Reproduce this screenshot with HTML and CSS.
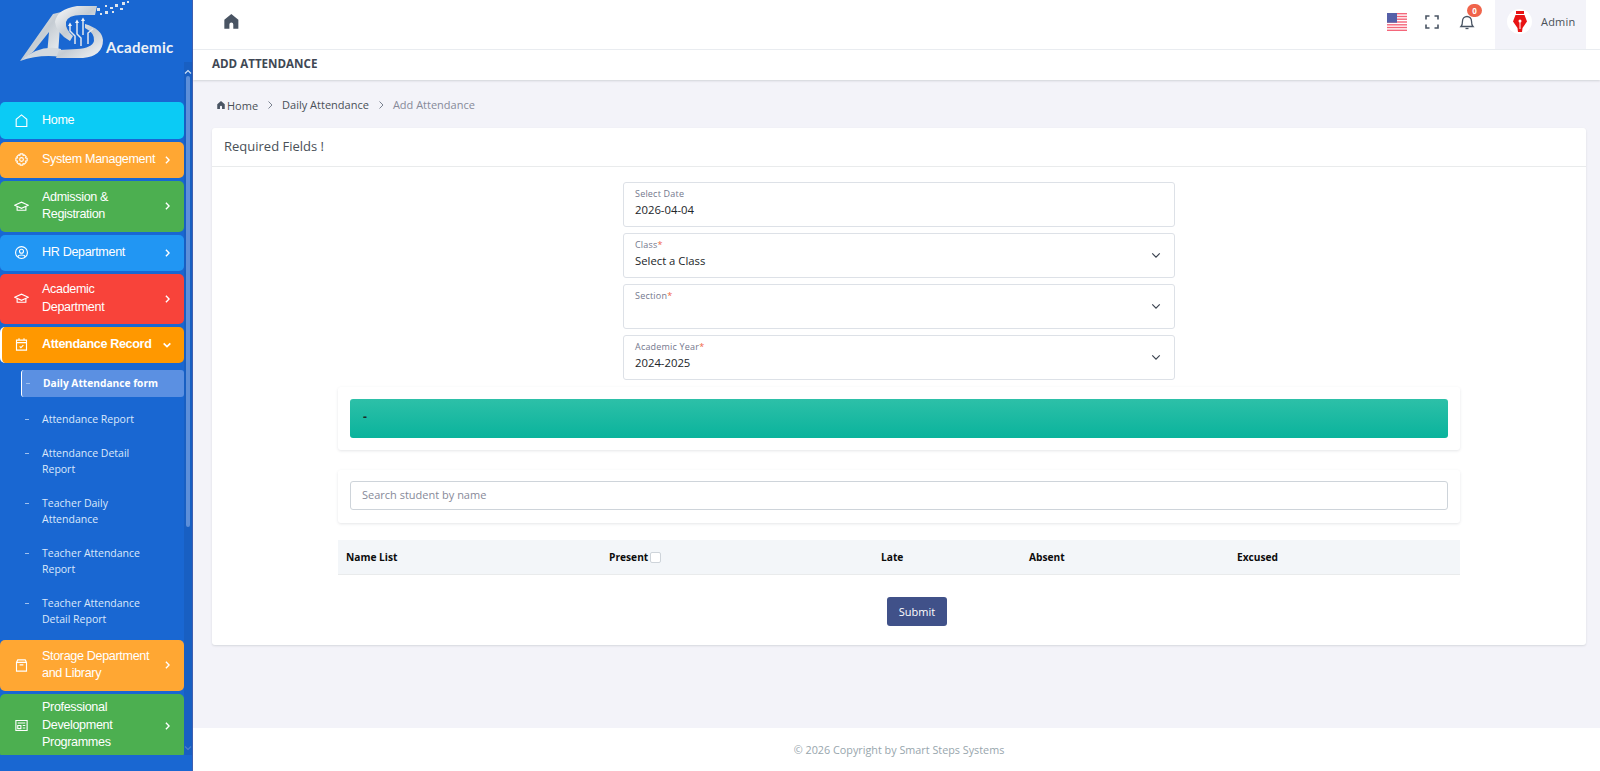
FILE: index.html
```html
<!DOCTYPE html>
<html lang="en">
<head>
<meta charset="utf-8">
<title>Add Attendance</title>
<link rel="stylesheet" href="styles.css">
</head>
<body>
<div class="layout">
  <aside class="sidebar">
    <div class="brand">
      <svg class="logo" viewBox="0 0 120 66" width="120" height="66">
        <defs><linearGradient id="sil" x1="0" y1="0" x2="1" y2="1"><stop offset="0" stop-color="#fbfcfd"/><stop offset=".5" stop-color="#c5ccd3"/><stop offset="1" stop-color="#f4f6f8"/></linearGradient></defs>
        <path d="M5 61L38 14 46 12 43 55 32 55 34 32 18 52Q11 57 5 61Z" fill="url(#sil)"/>
        <path d="M5 61Q25 44 46 49L46 57Q25 54 5 61Z" fill="#d3d9df"/>
        <path d="M82 6L62 6Q42 9 40 22 41 33 55 41L58 36Q50 29 51 22 53 15 66 15L80 15Z" fill="url(#sil)"/>
        <path d="M70 28Q80 33 79 41 77 48 62 49L44 50 41 58 68 58Q88 56 88 40 87 29 70 24Z" fill="url(#sil)"/>
        <g stroke="#e3e8ee" stroke-width="1.500" fill="none"><path d="M55 25V31L60 36V44"/><path d="M62 22V34L66 38V46"/><path d="M68 21V35"/><path d="M78 29L73 33V44"/></g>
        <g fill="#f0f4f8"><path d="M53 26l2-3.500 2 3.500z"/><path d="M60 23l2-3.500 2 3.500z"/><path d="M66 21l2-3.500 2 3.500z"/></g>
        <g fill="#dfe6ee"><rect x="82" y="8" width="3" height="3"/><rect x="85" y="13" width="2" height="2"/><rect x="90" y="11" width="3" height="3"/><rect x="95" y="7" width="3" height="2"/><rect x="100" y="4" width="3" height="3"/><rect x="97" y="11" width="2" height="2"/><rect x="107" y="2" width="3" height="3"/><rect x="112" y="1" width="2" height="2"/><rect x="105" y="8" width="3" height="2"/><rect x="90" y="5" width="2" height="2"/></g>
      </svg>
      <span class="brand-name">Academic</span>
    </div>
    <div class="menu-wrap">
      <nav class="menu">
        <a class="item cyan"><svg class="ic" viewBox="0 0 24 24"><path d="M3.500 21.500V10L12 3l8.500 7v11.500z"/></svg><span class="lbl">Home</span></a>
        <a class="item amber"><svg class="ic" viewBox="0 0 24 24"><circle cx="12" cy="12" r="3"/><path d="M10 3h4l.6 2.600 2-.9 2.800 2.800-1 2 2.600.6v4l-2.600.6 1 2-2.800 2.800-2-1L14 21h-4l-.6-2.500-2 1-2.800-2.800 1-2L3 14v-4l2.600-.6-1-2 2.800-2.800 2 .9z"/></svg><span class="lbl one-line">System Management</span><svg class="chev" viewBox="0 0 6 10"><path d="M1 1l4 4-4 4"/></svg></a>
        <a class="item green tall"><svg class="ic" viewBox="0 0 24 24"><path d="M1 10l11-5 11 5-11 5z"/><path d="M5 12v6h14v-6"/></svg><span class="lbl">Admission &amp; Registration</span><svg class="chev" viewBox="0 0 6 10"><path d="M1 1l4 4-4 4"/></svg></a>
        <a class="item blue"><svg class="ic" viewBox="0 0 24 24"><circle cx="12" cy="12" r="9.500"/><circle cx="12" cy="10" r="3.200"/><path d="M6 19c1-4 11-4 12 0"/></svg><span class="lbl">HR Department</span><svg class="chev" viewBox="0 0 6 10"><path d="M1 1l4 4-4 4"/></svg></a>
        <a class="item red tall"><svg class="ic" viewBox="0 0 24 24"><path d="M1 10l11-5 11 5-11 5z"/><path d="M5 12v6h14v-6"/></svg><span class="lbl">Academic Department</span><svg class="chev" viewBox="0 0 6 10"><path d="M1 1l4 4-4 4"/></svg></a>
        <a class="item orange current"><svg class="ic" viewBox="0 0 24 24"><path d="M4 5h16v16H4zM4 9h16M8 2v4M16 2v4M9 15l2 2 4-4"/></svg><span class="lbl one-line">Attendance Record</span><svg class="chev-down" viewBox="0 0 12 12"><path d="M2 4l4 4 4-4"/></svg></a>
        <ul class="submenu">
          <li class="sub active"><span class="dash"></span><span class="sub-text">Daily Attendance form</span></li>
          <li class="sub"><span class="dash"></span><span class="sub-text">Attendance Report</span></li>
          <li class="sub"><span class="dash"></span><span class="sub-text">Attendance Detail Report</span></li>
          <li class="sub"><span class="dash"></span><span class="sub-text">Teacher Daily Attendance</span></li>
          <li class="sub"><span class="dash"></span><span class="sub-text">Teacher Attendance Report</span></li>
          <li class="sub"><span class="dash"></span><span class="sub-text">Teacher Attendance Detail Report</span></li>
        </ul>
        <a class="item amber tall"><svg class="ic" viewBox="0 0 24 24"><path d="M4 7l2-4h12l2 4v14H4zM4 7h16M9 11h6"/></svg><span class="lbl">Storage Department and Library</span><svg class="chev" viewBox="0 0 6 10"><path d="M1 1l4 4-4 4"/></svg></a>
        <a class="item green taller"><svg class="ic" viewBox="0 0 24 24"><path d="M3 4h18v16H3zM6 8h12M6 12h5v5H6zM14 12h4M14 16h4"/></svg><span class="lbl">Professional Development Programmes</span><svg class="chev" viewBox="0 0 6 10"><path d="M1 1l4 4-4 4"/></svg></a>
      </nav>
      <div class="scrollbar">
        <svg class="sb-arrow" viewBox="0 0 8 8"><path d="M1 5.500l3-3 3 3"/></svg>
        <div class="sb-thumb"></div>
        <svg class="sb-arrow sb-down" viewBox="0 0 8 8"><path d="M1 2.500l3 3 3-3"/></svg>
      </div>
    </div>
  </aside>
  <div class="main">
    <header class="topbar">
      <svg class="home-ic" viewBox="0 0 24 24"><path d="M12 2.500L3 10v11.500h6.500V16a2.500 2.500 0 0 1 5 0v5.500H21V10z"/></svg>
      <div class="top-right">
        <svg class="flag" viewBox="0 0 20 18" width="20" height="18">
          <rect width="20" height="18" fill="#fff"/>
          <g fill="#f4667a"><rect width="20" height="1.400"/><rect y="2.800" width="20" height="1.400"/><rect y="5.500" width="20" height="1.400"/><rect y="8.300" width="20" height="1.400"/><rect y="11.100" width="20" height="1.400"/><rect y="13.800" width="20" height="1.400"/><rect y="16.600" width="20" height="1.400"/></g>
          <rect width="10" height="9.700" fill="#5560a8"/>
        </svg>
        <svg class="expand" viewBox="0 0 14 14" width="14" height="14"><path d="M1 4.500V1h3.500M9.500 1H13v3.500M13 9.500V13H9.500M4.500 13H1V9.500"/></svg>
        <div class="bell-wrap">
          <svg class="bell" viewBox="0 0 16 18" width="16" height="18"><path d="M2 13.500c1.500-1.500 1.500-3 1.500-5.500a4.500 4.500 0 0 1 9 0c0 2.500 0 4 1.500 5.500z"/><path d="M6.500 15.500h3"/></svg>
          <span class="badge">0</span>
        </div>
        <div class="user">
          <span class="avatar"><svg viewBox="0 0 14 22" width="14" height="22"><path fill="#e81414" d="M3 0h8v3H3zM2.500 4h9L14 10.500 9.500 17 9 21H5l-.5-4L0 10.500z"/><path fill="#fff" d="M6.500 10h1v8h-1z"/><circle cx="7" cy="10" r="1.500" fill="#fff"/></svg></span>
          <span class="user-name">Admin</span>
        </div>
      </div>
    </header>
    <div class="titlebar">ADD ATTENDANCE</div>
    <main class="content">
      <div class="crumbs">
        <span class="crumb-home"><svg viewBox="0 0 24 24" width="10" height="10"><path d="M12 2.500L3 10v11.500h6.500V16a2.500 2.500 0 0 1 5 0v5.500H21V10z"/></svg><span>Home</span></span>
        <svg class="sep" viewBox="0 0 8 10"><path d="M2.500 1.500L6 5 2.500 8.500"/></svg>
        <span>Daily Attendance</span>
        <svg class="sep" viewBox="0 0 8 10"><path d="M2.500 1.500L6 5 2.500 8.500"/></svg>
        <span class="crumb-cur">Add Attendance</span>
      </div>
      <section class="card">
        <h2 class="card-title">Required Fields !</h2>
        <div class="card-body">
          <div class="fields">
            <div class="field"><label>Select Date</label><div class="val">2026-04-04</div></div>
            <div class="field sel"><label>Class<i>*</i></label><div class="val">Select a Class</div><svg class="caret" viewBox="0 0 12 8"><path d="M1.500 1.500L6 6l4.500-4.500"/></svg></div>
            <div class="field sel"><label>Section<i>*</i></label><div class="val">&nbsp;</div><svg class="caret" viewBox="0 0 12 8"><path d="M1.500 1.500L6 6l4.500-4.500"/></svg></div>
            <div class="field sel"><label>Academic Year<i>*</i></label><div class="val">2024-2025</div><svg class="caret" viewBox="0 0 12 8"><path d="M1.500 1.500L6 6l4.500-4.500"/></svg></div>
          </div>
          <div class="wide">
            <div class="panel"><div class="alert">-</div></div>
            <div class="panel search"><div class="search-input">Search student by name</div></div>
            <div class="thead">
              <span class="c-name">Name List</span>
              <span class="c-present">Present<span class="check"></span></span>
              <span class="c-late">Late</span>
              <span class="c-absent">Absent</span>
              <span class="c-excused">Excused</span>
            </div>
          </div>
          <div class="actions"><button class="submit" type="button">Submit</button></div>
        </div>
      </section>
    </main>
    <footer class="footer">© 2026 Copyright by Smart Steps Systems</footer>
  </div>
</div>
</body>
</html>
```

FILE: styles.css
```css
* { box-sizing: border-box; }
html, body { margin: 0; height: 100%; overflow: hidden; }
body { font-family: "Open Sans", "Liberation Sans", sans-serif; font-size: 12px; color: #495057; background: #f3f3f9; }
.layout { display: grid; grid-template-columns: 193px 1fr; height: 771px; }

/* sidebar */
.sidebar { background: #1967d2; border-right: 1px solid #3f5fb0; display: flex; flex-direction: column; height: 771px; overflow: hidden; }
.brand { height: 62px; flex: none; position: relative; }
.logo { position: absolute; left: 15px; top: 0; }
.brand-name { position: absolute; left: 106px; top: 38px; font: 700 15px "Lato", sans-serif; letter-spacing: .3px; color: #eef2f6; }
.menu-wrap { flex: none; height: 693px; display: flex; overflow: hidden; }
.menu { width: 184px; flex: none; padding-top: 40px; display: flex; flex-direction: column; gap: 3px; }
.item { display: flex; align-items: center; flex: none; height: 36.500px; border-radius: 5px; color: #fff; font: 400 12.600px/17.500px "Liberation Sans", Arial, sans-serif; letter-spacing: -.35px; padding: 0 14px 0 14px; }
.item.tall { height: 50.500px; }
.item.red { height: 49.500px; }
.item.taller { height: 64px; margin-bottom: -4px; }
.ic { width: 15px; height: 15px; flex: none; fill: none; stroke: #fff; stroke-width: 1.800; margin-right: 13px; }
.lbl { flex: 0 0 111px; }
.one-line { white-space: nowrap; }
.chev { width: 5px; height: 8px; margin-left: auto; fill: none; stroke: #fff; stroke-width: 1.800; }
.chev-down { width: 10px; height: 10px; margin-left: auto; margin-right: -2px; fill: none; stroke: #fff; stroke-width: 2; }
.cyan { background: #0bcbf5; }
.amber { background: #ffa733; }
.green { background: #4caf50; }
.blue { background: #2196f3; }
.red { background: #f8433a; }
.orange { background: #ff9800; }
.current { border-left: 2px solid #fff; padding-left: 12px; font-weight: 700; }
.submenu { list-style: none; margin: 4px 0 .5px; padding: 0 0 0 21px; display: flex; flex-direction: column; }
.sub { display: flex; font: 500 10.500px/15.500px "Open Sans", sans-serif; color: #dbe8fb; padding: 9.500px 0 9.500px 3px; }
.sub-text { width: 112px; flex: none; }
.dash { width: 4px; height: 1px; background: #9fc0ee; margin: 7px 13px 0 1px; flex: none; }
.sub.active { background: #5b90e2; border-left: 1.500px solid #fff; border-radius: 3px; color: #fff; font-weight: 700; font-size: 10.200px; height: 27px; padding: 6px 0 0 3px; margin-bottom: 5px; white-space: nowrap; }
.scrollbar { width: 8px; flex: none; background: #185fc2; display: flex; flex-direction: column; align-items: center; }
.sb-arrow { width: 8px; height: 8px; margin-top: 6px; flex: none; fill: none; stroke: #cfe0f5; stroke-width: 1.200; }
.sb-thumb { width: 4px; height: 451px; background: #5d8fd9; border-radius: 2px; flex: none; }
.sb-down { margin-top: auto; margin-bottom: 3px; stroke: #4c7fc7; }

/* main */
.main { display: flex; flex-direction: column; min-width: 0; height: 771px; }
.topbar { height: 50px; flex: none; background: #fff; border-bottom: 1px solid #eceff3; display: flex; align-items: center; padding-left: 29px; }
.home-ic { width: 18.700px; height: 18.700px; fill: #495463; margin-top: -7px; }
.top-right { margin-left: auto; display: flex; align-items: center; height: 49px; }
.flag { margin-right: 18px; margin-top: -6px; }
.expand { fill: none; stroke: #495463; stroke-width: 1.600; margin-right: 20px; margin-top: -6px; }
.bell-wrap { position: relative; width: 16px; height: 18px; margin-right: 20px; margin-top: -6px; }
.bell { fill: none; stroke: #495463; stroke-width: 1.300; display: block; }
.badge { position: absolute; left: 8px; top: -9px; width: 15px; height: 13px; border-radius: 7px; background: #f0644b; color: #fff; font: 700 8px/13px "Open Sans", sans-serif; text-align: center; }
.user { width: 91px; height: 49px; background: #f3f3f9; display: flex; align-items: center; padding-left: 12px; margin-right: 14px; }
.avatar { width: 25px; height: 25px; border-radius: 50%; background: #fff; display: flex; align-items: center; justify-content: center; margin-right: 9px; margin-top: -6px; flex: none; }
.user-name { font: 400 11px "Open Sans", sans-serif; letter-spacing: .2px; margin-top: -6px; }
.titlebar { height: 30px; flex: none; background: #fff; box-shadow: 0 1px 2px rgba(56,65,74,.18); padding: 6px 0 0 19px; font: 700 11.600px/16px "Open Sans", sans-serif; color: #3f4854; position: relative; }

.content { flex: 1; padding: 15px 14px 0 19px; min-height: 0; }
.crumbs { display: flex; align-items: center; height: 20px; padding-left: 4px; font: 400 11px/20px "Open Sans", sans-serif; color: #495057; }
.crumb-home { display: flex; align-items: center; gap: 1px; padding-top: 2px; }
.crumb-home svg { fill: #495463; margin-top: -3px; }
.sep { width: 8px; height: 10px; margin: 0 8px 0 8px; fill: none; stroke: #7a8290; stroke-width: 1; }
.crumb-cur { color: #878a99; }
.card { margin-top: 13px; background: #fff; border-radius: 3px; box-shadow: 0 1px 2px rgba(56,65,74,.15); height: 517px; }
.card-title { margin: 0; height: 39px; padding: 0 12px; font: 500 13px/37px "Open Sans", sans-serif; color: #495057; border-bottom: 1px solid #e9ebec; }
.card-body { padding: 15px 0 0; display: flex; flex-direction: column; align-items: center; }
.fields { width: 552px; display: flex; flex-direction: column; gap: 6px; }
.field { height: 45px; border: 1.500px solid #dde1e7; border-radius: 3px; padding: 5px 11px 0; position: relative; color: #212529; }
.field label { display: block; font: 400 9px/12px "Open Sans", sans-serif; letter-spacing: .2px; color: #74788d; }
.field i { color: #f06548; font-style: normal; }
.val { font: 400 11.300px/17px "Open Sans", sans-serif; margin-top: 1px; }
.caret { position: absolute; right: 13px; top: 18px; width: 10px; height: 7px; fill: none; stroke: #3b4350; stroke-width: 1.400; }
.wide { width: 1122px; margin-top: 7px; }
.panel { background: #fff; border-radius: 3px; box-shadow: 0 1px 3px rgba(56,65,74,.13); padding: 12px; }
.alert { height: 39px; border-radius: 3px; background: linear-gradient(#2dc0a8, #0ab39c); color: #1a2a28; font: 700 12px/36px "Open Sans", sans-serif; padding-left: 13px; }
.search { margin-top: 20px; padding: 11px 12px 13px; height: 53px; }
.search-input { height: 29px; border: 1.500px solid #ced4da; border-radius: 3px; padding-left: 11px; font: 400 11px/26px "Open Sans", sans-serif; color: #878a99; }
.thead { margin-top: 17px; height: 35px; background: #f3f6f9; border-bottom: 1px solid #e9ebec; display: grid; grid-template-columns: 263px 272px 148px 208px 1fr; align-items: center; padding-left: 8px; font: 700 10.200px "Open Sans", sans-serif; color: #0c0c0c; }
.c-present { display: flex; align-items: center; }
.check { width: 11px; height: 11px; border: 1px solid #ced4da; border-radius: 2px; background: #fff; margin-left: 2px; }
.actions { margin-top: 22px; margin-left: 36px; }
.submit { width: 60px; height: 29px; border: 0; border-radius: 3px; background: #405189; color: #fff; font: 500 11px "Open Sans", sans-serif; padding: 0; display: block; }
.footer { height: 43px; flex: none; background: #fff; text-align: center; padding-left: 5px; font: 400 10.800px/44px "Open Sans", sans-serif; color: #98a6ad; }
```
